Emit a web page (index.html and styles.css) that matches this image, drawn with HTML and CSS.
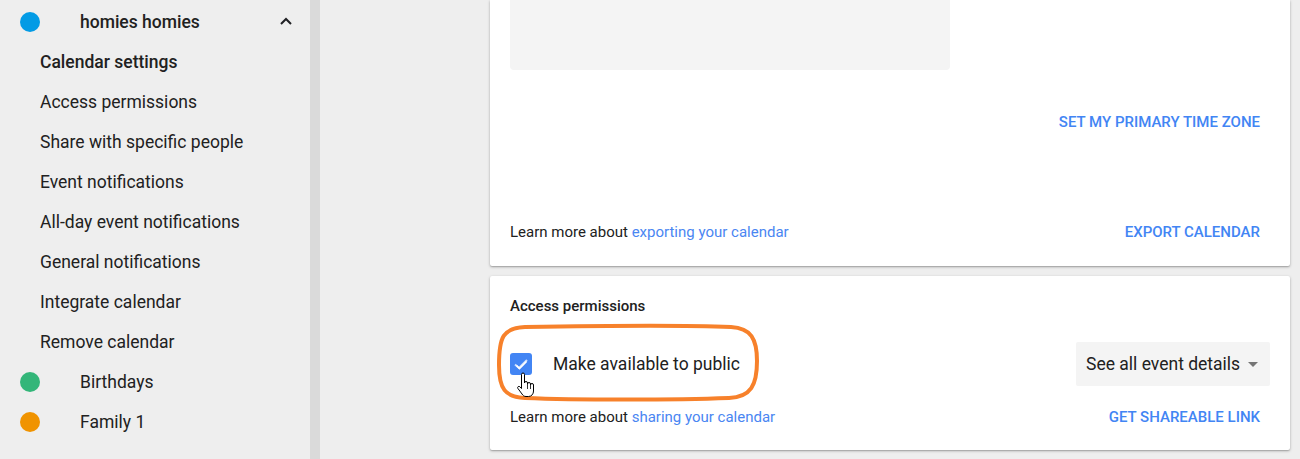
FILE: index.html
```html
<!DOCTYPE html>
<html>
<head>
<meta charset="utf-8">
<link rel="stylesheet" href="styles.css">
</head>
<body>
<div class="app">
  <nav class="sidebar">
    <div class="cal-row">
      <span class="dot dot-blue"></span>
      <span class="cal-name strong">homies homies</span>
      <svg class="chevron" width="14" height="10" viewBox="0 0 14 10"><path d="M2 8 L7 3 L12 8" fill="none" stroke="#202124" stroke-width="2"/></svg>
    </div>
    <div class="sub-row selected">Calendar settings</div>
    <div class="sub-row">Access permissions</div>
    <div class="sub-row">Share with specific people</div>
    <div class="sub-row">Event notifications</div>
    <div class="sub-row">All-day event notifications</div>
    <div class="sub-row">General notifications</div>
    <div class="sub-row">Integrate calendar</div>
    <div class="sub-row">Remove calendar</div>
    <div class="cal-row">
      <span class="dot dot-green"></span>
      <span class="cal-name">Birthdays</span>
    </div>
    <div class="cal-row">
      <span class="dot dot-orange"></span>
      <span class="cal-name">Family 1</span>
    </div>
  </nav>
  <div class="scrollbar"></div>
  <main class="main">
    <section class="card card-top">
      <div class="gray-box"></div>
      <div class="btn-row first-btn"><span class="text-btn">SET MY PRIMARY TIME ZONE</span></div>
      <div class="foot-row export-row">
        <span class="learn">Learn more about <span class="link">exporting your calendar</span></span>
        <span class="text-btn">EXPORT CALENDAR</span>
      </div>
    </section>
    <section class="card card-access">
      <h2 class="card-title">Access permissions</h2>
      <div class="perm-row">
        <div class="check-wrap">
          <span class="checkbox">
            <svg width="22" height="22" viewBox="0 0 22 22"><path d="M5 11.5 L9 15 L17 7" fill="none" stroke="#cfe0fc" stroke-width="2"/><path d="M6.5 12.5 L9.5 15.5 L16.5 8.5" fill="none" stroke="#ffffff" stroke-width="1.6"/></svg>
          </span>
          <span class="check-label">Make available to public</span>
        </div>
        <div class="select">
          <span>See all event details</span>
          <span class="caret"></span>
        </div>
      </div>
      <div class="foot-row share-row">
        <span class="learn">Learn more about <span class="link">sharing your calendar</span></span>
        <span class="text-btn">GET SHAREABLE LINK</span>
      </div>
      <svg class="annotation" width="268" height="80" viewBox="0 0 268 80"><path d="M30 4 C90 3 188 2 236 4 C256 5 262 16 262 38 C262 62 256 74 234 75 C180 77 80 77 30 75 C10 74 4 66 4 42 C4 14 8 5 30 4 Z" fill="none" stroke="#f7812b" stroke-width="4"/></svg>
      <svg class="cursor" width="20" height="26" viewBox="0 0 20 26"><path d="M5.5 2.5 a1.5 1.5 0 0 1 3 0 V11 a1.5 1.5 0 0 1 3 0 V12 a1.5 1.5 0 0 1 3 0 V13 a1.5 1.5 0 0 1 3 0 V19 c0 3-2 5.5-5 5.5 H10 c-2 0-3-1-4-2.5 L1.8 16.3 a1.3 1.3 0 0 1 2-1.6 L5.5 16.5 Z" fill="#fff" stroke="#000" stroke-width="1"/><path d="M11.5 12 V17 M14.5 13 V17" stroke="#000" stroke-width="0.8"/></svg>
    </section>
  </main>
</div>
</body>
</html>
```
FILE: styles.css
```css
* { box-sizing: border-box; }
html, body { margin: 0; padding: 0; }
body {
  width: 1300px;
  height: 459px;
  overflow: hidden;
  background: #eeeeee;
  font-family: Roboto, "Liberation Sans", Arial, sans-serif;
  color: #212121;
}
.app {
  display: flex;
  height: 459px;
}
.sidebar {
  width: 310px;
  flex: none;
  background: #eeeeee;
  padding-top: 2px;
}
.cal-row, .sub-row {
  height: 40px;
  display: flex;
  align-items: center;
  font-size: 17.5px;
}
.cal-row { padding-left: 20px; }
.sub-row { padding-left: 40px; }
.sub-row.selected { font-weight: 500; }
.dot {
  width: 20px;
  height: 20px;
  border-radius: 50%;
  flex: none;
}
.dot-blue { background: #039be5; }
.dot-green { background: #33b679; }
.dot-orange { background: #f09300; }
.cal-name { margin-left: 40px; flex: 1; }
.cal-name.strong { font-weight: 500; }
.chevron { margin-right: 17px; margin-top: -2px; }
.scrollbar {
  width: 10px;
  flex: none;
  background: #dadada;
}
.main {
  flex: 1;
  padding-left: 170px;
  padding-right: 10px;
  display: flex;
  flex-direction: column;
  gap: 10px;
}
.card {
  background: #ffffff;
  border-radius: 0 0 2px 2px;
  box-shadow: 0 1px 3px rgba(0,0,0,0.28), 0 1px 1px rgba(0,0,0,0.12);
  padding: 0 20px;
  position: relative;
}
.card-top { height: 266px; padding-bottom: 17px; }
.card-access { border-radius: 2px; height: 174px; padding-top: 20px; }
.gray-box {
  width: 440px;
  height: 70px;
  background: #f4f4f4;
  border-radius: 0 0 4px 4px;
}
.btn-row {
  display: flex;
  justify-content: flex-end;
  height: 36px;
  align-items: center;
}
.first-btn { margin-top: 34px; }
.text-btn {
  font-size: 15px;
  font-weight: 500;
  color: #4285f4;
  padding: 0 10px;
}
.foot-row {
  display: flex;
  justify-content: space-between;
  align-items: center;
  height: 36px;
}
.export-row { margin-top: 74px; }
.share-row { margin-top: 13px; }
.learn { font-size: 15px; color: #212121; }
.link { color: #4a86f2; }
.card-title {
  margin: 0;
  font-size: 15px;
  line-height: 20px;
  font-weight: 500;
}
.perm-row {
  margin-top: 26px;
  height: 44px;
  display: flex;
  justify-content: space-between;
  align-items: center;
}
.check-wrap { display: flex; align-items: center; }
.checkbox {
  width: 22px;
  height: 22px;
  border-radius: 3px;
  background: #4285f4;
  display: block;
}
.checkbox svg { display: block; }
.check-label { margin-left: 21px; font-size: 17.5px; }
.select {
  width: 194px;
  height: 44px;
  background: #f4f4f4;
  border-radius: 2px;
  display: flex;
  align-items: center;
  justify-content: space-between;
  padding: 0 10px;
  font-size: 17.5px;
}
.caret {
  width: 0;
  height: 0;
  border-left: 5px solid transparent;
  border-right: 5px solid transparent;
  border-top: 5px solid #757575;
  margin-right: 2px;
}
.annotation {
  position: absolute;
  left: 5px;
  top: 47px;
}
.cursor {
  position: absolute;
  left: 26px;
  top: 96px;
}
```
